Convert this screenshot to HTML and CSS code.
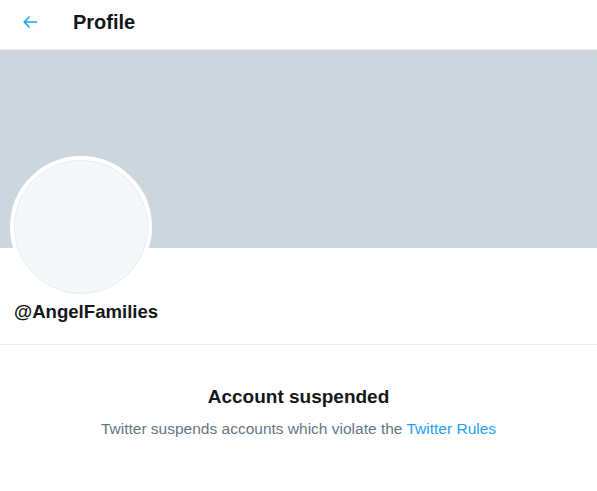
FILE: index.html
```html
<!DOCTYPE html>
<html lang="en">
<head>
    <meta charset="UTF-8">
    <meta name="viewport" content="width=device-width, initial-scale=1.0">
    <title>Profile</title>
    <link rel="stylesheet" href="styles.css">
</head>
<body>
    <header class="topbar">
        <a class="back" href="#" aria-label="Back">
            <svg viewBox="0 0 24 24" width="20" height="20">
                <path d="M20 11H7.414l4.293-4.293a1 1 0 0 0-1.414-1.414l-6 6a1 1 0 0 0 0 1.414l6 6a1 1 0 0 0 1.414-1.414L7.414 13H20a1 1 0 1 0 0-2z"></path>
            </svg>
        </a>
        <h2 class="title">Profile</h2>
    </header>

    <div class="banner"></div>

    <div class="profile">
        <div class="avatar"><div class="avatar-inner"></div></div>
        <div class="handle">@AngelFamilies</div>
    </div>

    <div class="suspended">
        <h3>Account suspended</h3>
        <p>Twitter suspends accounts which violate the <a href="#">Twitter Rules</a></p>
    </div>
</body>
</html>
```

FILE: styles.css
```css
body {
    margin: 0;
    font-family: "Liberation Sans", Arial, sans-serif;
    background-color: #fff;
    color: #14171a;
}
.topbar {
    box-sizing: border-box;
    height: 50px;
    padding-bottom: 5px;
    border-bottom: 1px solid #e6ecf0;
    display: flex;
    align-items: center;
}
.back {
    display: flex;
    margin-left: 20px;
    width: 20px;
    height: 20px;
}
.back svg {
    fill: #1da1f2;
}
.title {
    margin: 0 0 0 33px;
    font-size: 20px;
    font-weight: 700;
}
.banner {
    height: 198px;
    background-color: #ccd6dd;
}
.profile {
    padding: 0 14px;
    border-bottom: 1px solid #e6ecf0;
}
.avatar {
    width: 134px;
    height: 134px;
    margin-top: -92px;
    margin-left: -4px;
    border: 4px solid #fff;
    border-radius: 50%;
    background-color: #fff;
}
.avatar-inner {
    width: 132px;
    height: 132px;
    border: 1px solid #e6ecf0;
    border-radius: 50%;
    background-color: #f5f8fa;
}
.handle {
    font-size: 18.6px;
    font-weight: 700;
    line-height: 25px;
    padding: 1px 0 20px;
}
.suspended {
    text-align: center;
    padding-top: 40px;
}
.suspended h3 {
    margin: 0;
    font-size: 19px;
    font-weight: 700;
    line-height: 23px;
}
.suspended p {
    margin: 12px 0 0;
    font-size: 15.5px;
    color: #657786;
}
.suspended a {
    color: #1da1f2;
    text-decoration: none;
}
```
